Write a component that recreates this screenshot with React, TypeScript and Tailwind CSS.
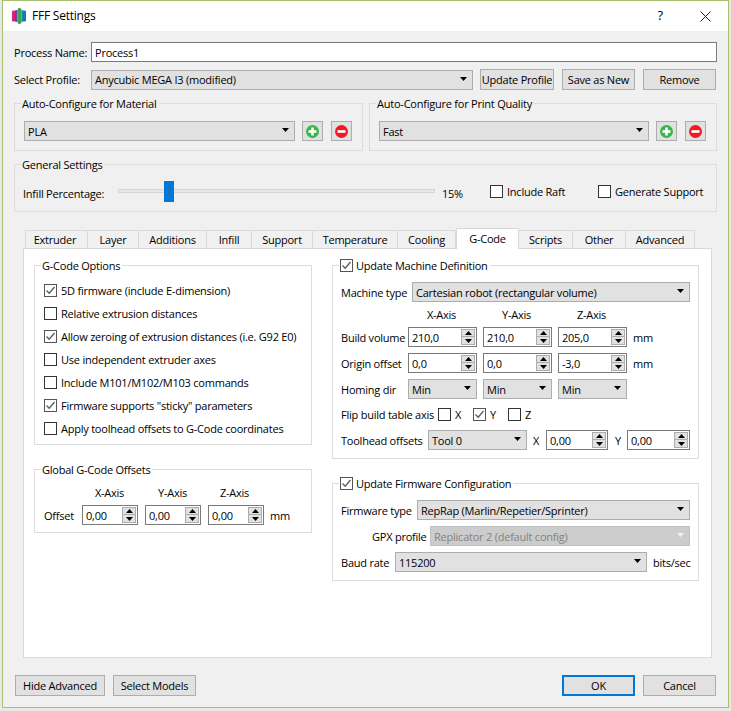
import type { ReactNode } from "react";

const tabs = [
  { label: "Extruder", width: "w-[63px]" },
  { label: "Layer", width: "w-[51px]" },
  { label: "Additions", width: "w-[68px]" },
  { label: "Infill", width: "w-[45px]" },
  { label: "Support", width: "w-[61px]" },
  { label: "Temperature", width: "w-[85px]" },
  { label: "Cooling", width: "w-[58px]" },
  { label: "G-Code", width: "w-[63px]", active: true },
  { label: "Scripts", width: "w-[54px]" },
  { label: "Other", width: "w-[53px]" },
  { label: "Advanced", width: "w-[69px]" },
];

const gcodeOptions = [
  { label: "5D firmware (include E-dimension)", checked: true },
  { label: "Relative extrusion distances" },
  { label: "Allow zeroing of extrusion distances (i.e. G92 E0)", checked: true },
  { label: "Use independent extruder axes" },
  { label: "Include M101/M102/M103 commands" },
  { label: 'Firmware supports "sticky" parameters', checked: true },
  { label: "Apply toolhead offsets to G-Code coordinates" },
];

function Check({ checked = false }: { checked?: boolean }) {
  return (
    <span
      className={`flex h-[13px] w-[13px] shrink-0 items-center justify-center border bg-white ${
        checked ? "border-[#555555]" : "border-[#333333]"
      }`}
    >
      {checked ? (
        <svg width="11" height="11" viewBox="0 0 11 11" fill="none">
          <path d="M1.5 5.5L4.2 8.2L9.5 2" stroke="#5a5a5a" strokeWidth="1.3" />
        </svg>
      ) : null}
    </span>
  );
}

function CheckRow({ label, checked }: { label: string; checked?: boolean }) {
  return (
    <label className="flex h-[23px] items-center gap-[4px] whitespace-nowrap">
      <Check checked={checked} />
      {label}
    </label>
  );
}

function Combo({
  value,
  width,
  disabled = false,
}: {
  value: string;
  width: string;
  disabled?: boolean;
}) {
  return (
    <div
      className={`flex h-[20px] shrink-0 items-center justify-between border pl-[3px] pr-[5px] ${width} ${
        disabled
          ? "border-[#bfbfbf] bg-[#cccccc] text-[#838383]"
          : "border-[#adadad] bg-[#e1e1e1]"
      }`}
    >
      <span className="whitespace-nowrap">{value}</span>
      <svg width="7" height="4" viewBox="0 0 7 4" className="mb-[2px]">
        <path d="M0 0H7L3.5 4Z" fill={disabled ? "#f2f2f2" : "#000000"} />
      </svg>
    </div>
  );
}

function Spin({ value, width }: { value: string; width: string }) {
  return (
    <div
      className={`flex h-[20px] shrink-0 items-center justify-between border border-[#7a7a7a] bg-white pl-[3px] pr-[1px] ${width}`}
    >
      <span className="whitespace-nowrap">{value}</span>
      <div className="flex h-[16px] w-[14px] flex-col">
        <div className="flex h-[8px] items-center justify-center border border-[#adadad] bg-[#e1e1e1]">
          <svg width="7" height="4" viewBox="0 0 7 4">
            <path d="M3.5 0L7 4H0Z" fill="#000000" />
          </svg>
        </div>
        <div className="flex h-[8px] items-center justify-center border border-t-0 border-[#adadad] bg-[#e1e1e1]">
          <svg width="7" height="4" viewBox="0 0 7 4">
            <path d="M0 0H7L3.5 4Z" fill="#000000" />
          </svg>
        </div>
      </div>
    </div>
  );
}

function Button({
  children,
  width,
  primary = false,
}: {
  children: ReactNode;
  width: string;
  primary?: boolean;
}) {
  return (
    <button
      type="button"
      className={`flex h-[21px] shrink-0 items-center justify-center bg-[#e1e1e1] ${width} ${
        primary ? "border-2 border-[#0078d7]" : "border border-[#adadad]"
      }`}
    >
      {children}
    </button>
  );
}

function IconButton({ kind }: { kind: "add" | "remove" }) {
  return (
    <button
      type="button"
      className="flex h-[20px] w-[21px] shrink-0 items-center justify-center border border-[#adadad] bg-[#e1e1e1]"
    >
      <svg width="13" height="13" viewBox="0 0 13 13">
        <circle cx="6.5" cy="6.5" r="6.5" fill={kind === "add" ? "#39b54a" : "#ed1c24"} />
        <rect x="2.5" y="5.2" width="8" height="2.6" fill="#ffffff" />
        {kind === "add" ? <rect x="5.2" y="2.5" width="2.6" height="8" fill="#ffffff" /> : null}
      </svg>
    </button>
  );
}

function Group({
  title,
  className,
  children,
  surface = "bg-[#f0f0f0]",
}: {
  title: ReactNode;
  className: string;
  children: ReactNode;
  surface?: string;
}) {
  return (
    <div className={`relative border border-[#dcdcdc] ${className}`}>
      <div
        className={`absolute left-[6px] top-[-9px] flex h-[16px] items-center gap-[3px] pl-[1px] pr-[2px] whitespace-nowrap ${surface}`}
      >
        {title}
      </div>
      {children}
    </div>
  );
}

function AxisLabels({ className }: { className: string }) {
  return (
    <div className={`flex h-[13px] items-center ${className}`}>
      {["X-Axis", "Y-Axis", "Z-Axis"].map((axis) => (
        <span key={axis} className="w-[75px] text-center">
          {axis}
        </span>
      ))}
    </div>
  );
}

export default function App() {
  return (
    <div className="h-[711px] w-[731px] overflow-hidden bg-[#e8e8e8] pl-[2px] text-[11px] leading-none tracking-[-0.23px] text-[#000000] [font-family:'Open_Sans',sans-serif]">
      <div className="flex h-[708px] w-[727px] flex-col border border-[#a6c06e] bg-[#f0f0f0]">
        {/* title bar */}
        <div className="flex h-[30px] shrink-0 items-center bg-white pl-[9px]">
          <svg width="14" height="16" viewBox="0 0 14 16" className="mt-[-1px]">
            <rect x="0" y="2.5" width="3" height="11" rx="1.2" fill="#d6207f" />
            <rect x="3" y="2" width="2.5" height="12" rx="1" fill="#6a3fa8" />
            <rect x="5.5" y="0" width="4" height="16" rx="1.8" fill="#35a84f" />
            <rect x="9.5" y="2" width="1.8" height="12" rx="0.8" fill="#1a8f9c" />
            <rect x="11" y="2.5" width="3" height="11" rx="1.2" fill="#1f6fd0" />
          </svg>
          <span className="ml-[6px] text-[12px]">FFF Settings</span>
          <span className="ml-auto mr-[37px] mb-[2px] text-[13px]">?</span>
          <svg width="11" height="11" viewBox="0 0 11 11" className="mr-[17px]">
            <path d="M0.5 0.5L10.5 10.5M10.5 0.5L0.5 10.5" stroke="#222222" strokeWidth="1" />
          </svg>
        </div>

        <div className="flex flex-col px-[11px] pt-[11px]">
          <div className="flex h-[20px] items-center">
            <span className="w-[77px]">Process Name:</span>
            <div className="flex h-[20px] flex-1 items-center border border-[#7a7a7a] bg-white pl-[3px]">
              Process1
            </div>
          </div>

          <div className="mt-[7px] flex h-[21px] items-center">
            <span className="w-[77px]">Select Profile:</span>
            <Combo value="Anycubic MEGA I3 (modified)" width="w-[382px]" />
            <div className="ml-[7px] flex gap-[8px]">
              <Button width="w-[74px]">Update Profile</Button>
              <Button width="w-[73px]">Save as New</Button>
              <Button width="w-[73px]">Remove</Button>
            </div>
          </div>

          <div className="mt-[13px] flex gap-[6px]">
            <Group title="Auto-Configure for Material" className="h-[48px] w-[349px]">
              <div className="flex gap-[7px] pl-[9px] pt-[17px]">
                <Combo value="PLA" width="w-[271px]" />
                <IconButton kind="add" />
                <div className="ml-[1px]">
                  <IconButton kind="remove" />
                </div>
              </div>
            </Group>
            <Group title="Auto-Configure for Print Quality" className="h-[48px] w-[348px]">
              <div className="flex gap-[7px] pl-[9px] pt-[17px]">
                <Combo value="Fast" width="w-[270px]" />
                <IconButton kind="add" />
                <div className="ml-[1px]">
                  <IconButton kind="remove" />
                </div>
              </div>
            </Group>
          </div>

          <Group title="General Settings" className="mt-[13px] h-[48px]">
            <div className="flex h-[46px] items-center pl-[8px] pt-[8px]">
              <span className="w-[95px] pt-[2px]">Infill Percentage:</span>
              <div className="relative mb-[2px] h-[4px] w-[317px] border border-[#d6d6d6] bg-[#e7e7e7]">
                <div className="absolute left-[45px] top-[-9px] h-[21px] w-[10px] bg-[#0078d7]" />
              </div>
              <span className="ml-[7px] w-[48px] pt-[2px]">15%</span>
              <label className="mb-[1px] flex w-[108px] items-center gap-[4px] whitespace-nowrap">
                <Check />
                Include Raft
              </label>
              <label className="mb-[1px] flex items-center gap-[4px] whitespace-nowrap">
                <Check />
                Generate Support
              </label>
            </div>
          </Group>

          {/* tab widget */}
          <div className="ml-[9px] mr-[5px] mt-[16px]">
            <div className="relative z-10 flex h-[21px] pl-[2px]">
              {tabs.map((tab) =>
                tab.active ? (
                  <div
                    key={tab.label}
                    className={`flex h-[21px] items-center justify-center border border-b-0 border-[#d9d9d9] bg-white pb-[2px] ${tab.width}`}
                  >
                    {tab.label}
                  </div>
                ) : (
                  <div
                    key={tab.label}
                    className={`mt-[2px] flex h-[19px] items-center justify-center border border-l-0 border-[#d9d9d9] bg-[#f0f0f0] first:border-l first:pr-[3px] ${tab.width}`}
                  >
                    {tab.label}
                  </div>
                ),
              )}
            </div>

            <div className="mt-[-1px] flex h-[410px] gap-[20px] border border-[#d9d9d9] bg-white pl-[10px] pt-[16px]">
              <div className="flex w-[278px] flex-col gap-[24px]">
                <Group
                  title="G-Code Options"
                  surface="bg-white"
                  className="h-[180px] pl-[9px] pt-[13px]"
                >
                  {gcodeOptions.map((option) => (
                    <CheckRow key={option.label} label={option.label} checked={option.checked} />
                  ))}
                </Group>

                <Group title="Global G-Code Offsets" surface="bg-white" className="h-[64px]">
                  <div className="flex h-[17px] pl-[43px] pt-[17px]">
                    <span className="w-[63px] text-center">X-Axis</span>
                    <span className="w-[63px] text-center">Y-Axis</span>
                    <span className="w-[61px] text-center">Z-Axis</span>
                  </div>
                  <div className="mt-[18px] flex items-center pl-[9px]">
                    <span className="w-[38px]">Offset</span>
                    <div className="flex gap-[7px]">
                      <Spin value="0,00" width="w-[56px]" />
                      <Spin value="0,00" width="w-[56px]" />
                      <Spin value="0,00" width="w-[56px]" />
                    </div>
                    <span className="ml-[6px]">mm</span>
                  </div>
                </Group>
              </div>

              <div className="flex w-[367px] flex-col gap-[24px]">
                <Group
                  surface="bg-white"
                  title={
                    <>
                      <Check checked />
                      Update Machine Definition
                    </>
                  }
                  className="h-[194px] pl-[8px] pt-[16px]"
                >
                  <div className="flex items-center">
                    <span className="w-[71px]">Machine type</span>
                    <Combo value="Cartesian robot (rectangular volume)" width="w-[278px]" />
                  </div>
                  <AxisLabels className="ml-[63px] mt-[6px]" />
                  <div className="mt-[6px] flex items-center">
                    <span className="w-[67px]">Build volume</span>
                    <div className="flex gap-[6px]">
                      <Spin value="210,0" width="w-[69px]" />
                      <Spin value="210,0" width="w-[69px]" />
                      <Spin value="205,0" width="w-[69px]" />
                    </div>
                    <span className="ml-[6px]">mm</span>
                  </div>
                  <div className="mt-[6px] flex items-center">
                    <span className="w-[67px]">Origin offset</span>
                    <div className="flex gap-[6px]">
                      <Spin value="0,0" width="w-[69px]" />
                      <Spin value="0,0" width="w-[69px]" />
                      <Spin value="-3,0" width="w-[69px]" />
                    </div>
                    <span className="ml-[6px]">mm</span>
                  </div>
                  <div className="mt-[6px] flex items-center">
                    <span className="w-[67px]">Homing dir</span>
                    <div className="flex gap-[6px]">
                      <Combo value="Min" width="w-[69px]" />
                      <Combo value="Min" width="w-[69px]" />
                      <Combo value="Min" width="w-[69px]" />
                    </div>
                  </div>
                  <div className="mt-[8px] flex h-[14px] items-center">
                    <span className="w-[97px] whitespace-nowrap">Flip build table axis</span>
                    <span className="flex w-[35px] items-center gap-[4px]">
                      <Check />X
                    </span>
                    <span className="flex w-[35px] items-center gap-[4px]">
                      <Check checked />Y
                    </span>
                    <span className="flex items-center gap-[4px]">
                      <Check />Z
                    </span>
                  </div>
                  <div className="mt-[9px] flex items-center">
                    <span className="w-[87px] whitespace-nowrap">Toolhead offsets</span>
                    <Combo value="Tool 0" width="w-[99px]" />
                    <span className="ml-[6px] w-[13px]">X</span>
                    <Spin value="0,00" width="w-[62px]" />
                    <span className="ml-[7px] w-[12px]">Y</span>
                    <Spin value="0,00" width="w-[63px]" />
                  </div>
                </Group>

                <Group
                  surface="bg-white"
                  title={
                    <>
                      <Check checked />
                      Update Firmware Configuration
                    </>
                  }
                  className="h-[98px] pl-[8px] pt-[16px]"
                >
                  <div className="flex items-center">
                    <span className="w-[76px]">Firmware type</span>
                    <Combo value="RepRap (Marlin/Repetier/Sprinter)" width="w-[273px]" />
                  </div>
                  <div className="mt-[6px] flex items-center">
                    <span className="w-[89px] pl-[31px] whitespace-nowrap">GPX profile</span>
                    <Combo value="Replicator 2 (default config)" width="w-[260px]" disabled />
                  </div>
                  <div className="mt-[6px] flex items-center">
                    <span className="w-[54px]">Baud rate</span>
                    <Combo value="115200" width="w-[252px]" />
                    <span className="ml-[6px] whitespace-nowrap">bits/sec</span>
                  </div>
                </Group>
              </div>
            </div>
          </div>

          {/* bottom buttons */}
          <div className="mt-[17px] flex items-center pl-[1px] pr-[1px]">
            <Button width="w-[90px]">Hide Advanced</Button>
            <div className="ml-[8px]">
              <Button width="w-[83px]">Select Models</Button>
            </div>
            <div className="ml-auto flex gap-[8px]">
              <Button width="w-[73px]" primary>
                OK
              </Button>
              <Button width="w-[73px]">Cancel</Button>
            </div>
          </div>
        </div>
      </div>
    </div>
  );
}
